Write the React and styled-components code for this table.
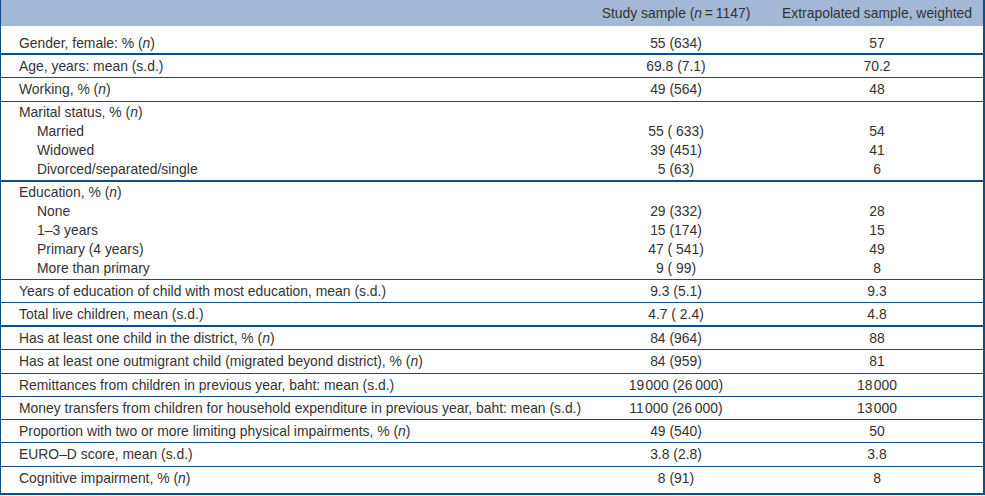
import React from "react";
import styled, { createGlobalStyle } from "styled-components";

const GlobalStyle = createGlobalStyle`
  body {
    margin: 0;
    background: #ffffff;
    font-family: "Liberation Sans", Arial, sans-serif;
    color: #333333;
  }
`;

const Table = styled.div`
  width: 985px;
  box-sizing: border-box;
  border-left: 1px solid #0d4f8b;
  border-right: 2px solid #0d4f8b;
  border-bottom: 2px solid #0d4f8b;
  font-size: 13.9px;
`;

const HeadRow = styled.div`
  display: grid;
  grid-template-columns: 580px 190px 1fr;
  height: 26px;
  align-items: center;
  background: #a3b8d6;
  white-space: nowrap;
`;

const HeadCell = styled.div`
  text-align: center;
`;

const padFor = (p) => {
  if (p.$first) return "8px 0 0";
  if (p.$last) return "2px 0 5.5px";
  if (p.$multi) return "1px 0 1px";
  return "2px 0 1.25px";
};

const Group = styled.div`
  padding: ${padFor};
  border-bottom: ${(p) => (p.$last ? "none" : p.$thick ? "2px solid #0d4f8b" : "1px solid #0d4f8b")};
`;

const Line = styled.div`
  display: grid;
  grid-template-columns: 580px 190px 1fr;
  line-height: 19px;
  white-space: nowrap;
`;

const Label = styled.div`
  padding-left: ${(p) => (p.$sub ? "36px" : "18px")};
`;

const Value = styled.div`
  text-align: center;
`;

const N = () => <i>n</i>;

const groups = [
  { first: true, thick: true, lines: [[<>Gender, female: % (<N />)</>, "55 (634)", "57"]] },
  { lines: [["Age, years: mean (s.d.)", "69.8 (7.1)", "70.2"]] },
  { lines: [[<>Working, % (<N />)</>, "49 (564)", "48"]] },
  {
    thick: true,
    lines: [
      [<>Marital status, % (<N />)</>, "", ""],
      ["Married", "55 ( 633)", "54", true],
      ["Widowed", "39 (451)", "41", true],
      ["Divorced/separated/single", "5 (63)", "6", true],
    ],
  },
  {
    lines: [
      [<>Education, % (<N />)</>, "", ""],
      ["None", "29 (332)", "28", true],
      ["1–3 years", "15 (174)", "15", true],
      ["Primary (4 years)", "47 ( 541)", "49", true],
      ["More than primary", "9 ( 99)", "8", true],
    ],
  },
  { lines: [["Years of education of child with most education, mean (s.d.)", "9.3 (5.1)", "9.3"]] },
  { thick: true, lines: [["Total live children, mean (s.d.)", "4.7 ( 2.4)", "4.8"]] },
  { lines: [[<>Has at least one child in the district, % (<N />)</>, "84 (964)", "88"]] },
  { lines: [[<>Has at least one outmigrant child (migrated beyond district), % (<N />)</>, "84 (959)", "81"]] },
  { lines: [["Remittances from children in previous year, baht: mean (s.d.)", "19\u200A000 (26\u2009000)", "18\u200A000"]] },
  {
    lines: [
      [
        "Money transfers from children for household expenditure in previous year, baht: mean (s.d.)",
        "11\u200A000 (26\u2009000)",
        "13\u200A000",
      ],
    ],
  },
  { lines: [[<>Proportion with two or more limiting physical impairments, % (<N />)</>, "49 (540)", "50"]] },
  { lines: [["EURO–D score, mean (s.d.)", "3.8 (2.8)", "3.8"]] },
  { last: true, lines: [[<>Cognitive impairment, % (<N />)</>, "8 (91)", "8"]] },
];

export default function App() {
  return (
    <>
      <GlobalStyle />
      <Table>
        <HeadRow>
          <div />
          <HeadCell>
            Study sample (<i>n</i>{"\u2009=\u2009"}1147)
          </HeadCell>
          <HeadCell>Extrapolated sample, weighted</HeadCell>
        </HeadRow>
        {groups.map((g, i) => (
          <Group
            key={i}
            $first={g.first}
            $last={g.last}
            $thick={g.thick}
            $multi={g.lines.length > 1}
          >
            {g.lines.map(([label, a, b, sub], j) => (
              <Line key={j}>
                <Label $sub={sub}>{label}</Label>
                <Value>{a}</Value>
                <Value>{b}</Value>
              </Line>
            ))}
          </Group>
        ))}
      </Table>
    </>
  );
}
